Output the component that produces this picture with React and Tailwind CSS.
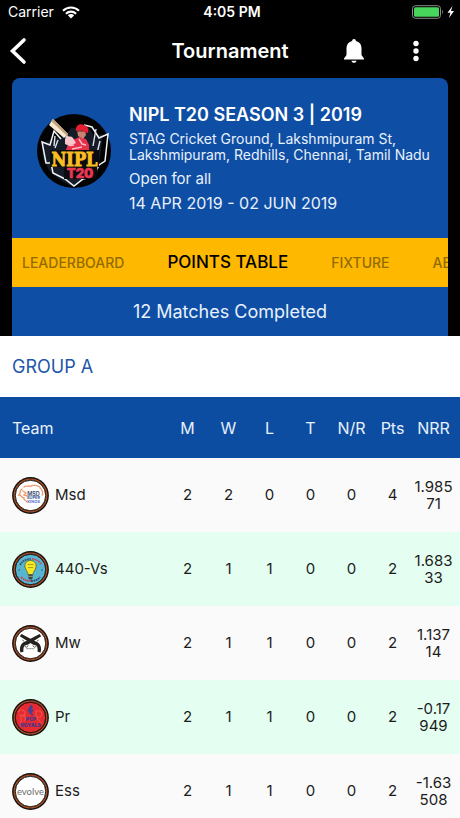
const teams = [
  { name: 'Msd', stats: [2, 2, 0, 0, 0, 4], nrr: '1.98571', Logo: MsdLogo },
  { name: '440-Vs', stats: [2, 1, 1, 0, 0, 2], nrr: '1.68333', Logo: BulbLogo },
  { name: 'Mw', stats: [2, 1, 1, 0, 0, 2], nrr: '1.13714', Logo: PistolsLogo },
  { name: 'Pr', stats: [2, 1, 1, 0, 0, 2], nrr: '-0.17949', Logo: RoyalsLogo },
  { name: 'Ess', stats: [2, 1, 1, 0, 0, 2], nrr: '-1.63508', Logo: EvolveLogo },
];

const statHeads = ['M', 'W', 'L', 'T', 'N/R', 'Pts', 'NRR'];

function Badge({ fill, children }) {
  return (
    <svg viewBox="0 0 37 37" className="size-[37px] shrink-0" aria-hidden="true">
      <circle cx="18.5" cy="18.5" r="18.4" fill="#15100e" />
      <circle cx="18.5" cy="18.5" r="15.200" fill={fill} />
      <circle cx="18.5" cy="18.5" r="16.300" fill="none" stroke="#a84f28" strokeWidth="1.300" />
      <circle cx="18.5" cy="18.5" r="15.200" fill="none" stroke="#1d1410" strokeWidth="0.900" />
      {children}
    </svg>
  );
}

function MsdLogo() {
  return (
    <Badge fill="#ffffff">
      <g fill="none" stroke="#ef9a6c" strokeWidth="1.400" strokeLinecap="round">
        <path d="M12 10c3-2 5 0 7-1s6-1 9 1" strokeDasharray="2.5 1" />
        <path d="M10 12c-3 2-1 4-3 6 3 0 2 3 5 3-1 2 2 2 3 4" />
        <path d="M11 14l3 2-2 2 3 1" />
        <path d="M28 11c3 2 3 5 2 8" strokeDasharray="2 1" />
      </g>
      <g fontFamily="Inter, sans-serif" fontWeight="700" textAnchor="middle">
        <text x="21.500" y="18.500" fontSize="5.500" fill="#4d5778">MSD</text>
        <text x="21.500" y="22.300" fontSize="4" fill="#3f5f9f">SUPER</text>
        <text x="21.500" y="26" fontSize="4" fill="#5a6fd8">KINGS</text>
      </g>
    </Badge>
  );
}

function BulbLogo() {
  return (
    <Badge fill="#57b5cf">
      <path d="M8 14c3-5 7-6 11-6" fill="none" stroke="#33496b" strokeWidth="1.6" strokeDasharray="1.6 .7" />
      <path d="M20 8c4 0 7 2 9 5" fill="none" stroke="#c4485a" strokeWidth="1.6" strokeDasharray="1.6 .7" />
      <path d="M9 26c3 3 6 4 10 4" fill="none" stroke="#c4485a" strokeWidth="1.8" strokeDasharray="1.8 .6" />
      <path d="M19 30c4 0 7-1 9-4" fill="none" stroke="#33496b" strokeWidth="1.8" strokeDasharray="1.8 .6" />
      <path d="M18.5 9.500c-4 0-6 3-5.500 6.500 .4 3 3 4.500 3 7.500h5c0-3 2.600-4.500 3-7.500.5-3.500-1.500-6.500-5.500-6.500z" fill="#f7e823" stroke="#56541d" strokeWidth=".7" />
      <path d="M15.500 13.500h6M16 16.500h5" fill="none" stroke="#a39a1f" strokeWidth=".9" />
      <path d="M16.300 23.500h4.400v3.500l-1 1.500h-2.400l-1-1.500z" fill="#3f4842" />
      <path d="M16.300 25.400h4.400" stroke="#cfd3a0" strokeWidth=".6" />
      <circle cx="7" cy="19" r=".7" fill="#33496b" />
      <circle cx="30" cy="19" r=".7" fill="#33496b" />
    </Badge>
  );
}

function PistolsLogo() {
  return (
    <Badge fill="#ffffff">
      <g fill="#24211f">
        <path d="M27.500 9l1.700 2.300-13 8.200-3.400 1c-1.600 1.500-1.400 3.500-1.400 6.200l-3 .8c-1.200-3.900-.3-7.500 2.600-10l3.300-1.500z" />
        <path d="M9.500 9l-1.700 2.300 13 8.200 3.400 1c1.600 1.500 1.400 3.500 1.400 6.200l3 .8c1.200-3.900.3-7.500-2.600-10l-3.300-1.500z" />
      </g>
      <path d="M12 16.500l-1.500-1.700M25 16.500l1.500-1.700M13 21c.6 1.800 2.500 1.600 3-.6M24 21c-.6 1.800-2.500 1.600-3-.6" stroke="#24211f" strokeWidth=".8" fill="none" />
      <path d="M14.500 23.700h8" stroke="#777" strokeWidth="1" strokeDasharray="1.400 .5" />
    </Badge>
  );
}

function RoyalsLogo() {
  return (
    <Badge fill="#e52b31">
      <path d="M6 13q3-4 6-1t-2 6M24 12h4q4 3 0 6h-4zM24 18l6 7M9 16v12M7 16h5q3 3 0 6" fill="none" stroke="#ee5148" strokeWidth="1.100" />
      <path d="M19 6l1.500 2.200-1.300 1.700 2.200 1.700-2.300 1.500 1.800 3.400-3-2-1.800-3.200 1.300-2.600z" fill="#48418f" stroke="#48418f" strokeWidth="1" />
      <g fontFamily="Inter, sans-serif" fontWeight="900" textAnchor="middle" fill="#46378f">
        <text x="19" y="22" fontSize="5">PCP</text>
        <text x="18.500" y="27.500" fontSize="5">ROYALS</text>
      </g>
    </Badge>
  );
}

function EvolveLogo() {
  return (
    <Badge fill="#ffffff">
      <text x="18.500" y="21.500" fontSize="9.500" textAnchor="middle" fontFamily="Lato, sans-serif" fill="#6a6a6a">
        evolve
      </text>
    </Badge>
  );
}

function TournamentLogo() {
  return (
    <svg viewBox="0 0 74 74" className="size-[74px] shrink-0" role="img" aria-label="NIPL T20">
      <circle cx="37" cy="37" r="37" fill="#020203" />
      <path d="M20 24l10-4 4-6h18l5 8 9-2-3 24-6 15-11 8-10 6-11-6-12-9-7-14-1-15z" fill="#151c28" />
      <path d="M24 25L17 17l-4 14-8-3 4 21h5l2 10 12 6 9 7 9-7 11-3 5-11 6-4 3-27-9 4-7-11-8-2" fill="none" stroke="#f1f3f6" strokeWidth="1.500" />
      <path d="M59 15l-3 17M63 27l-3 12M18 22l-1 10M21 26l-3 8" fill="none" stroke="#dfe4ec" strokeWidth="1.400" />
      <path d="M16 5l15 15-4 4L12 11z" fill="#f7ead0" />
      <path d="M16 5l15 15-1.500 1.500L14 7z" fill="#c7a477" />
      <path d="M29 22l6 6" stroke="#d6d0d2" strokeWidth="3" />
      <path d="M28 38l4-10 10-5 7 2 3 6v8z" fill="#e7304a" />
      <path d="M28 25c2-3 6-3 8-1l3 5-6 3-5-2z" fill="#f6c9cf" />
      <path d="M29 29c2 2 5 3 8 2M42 25l3 5 4 1M35 35l10-2" stroke="#f7b8c0" strokeWidth="1.500" fill="none" />
      <path d="M40 16h8l1 5-3 4-5-3z" fill="#c98271" />
      <path d="M39 17c-1-6 4-8 8-6 4 1 5 4 4 8l-4-1-3-2z" fill="#e3202f" />
      <path d="M40 17h6" stroke="#6f1019" strokeWidth="1" />
      <path d="M13 36h49v17h-2l1 5-3 7H27V53H13z" fill="#0a0c11" />
      <g textAnchor="middle">
        <text x="37.500" y="51.500" fontSize="18" fontWeight="700" fontFamily="'DejaVu Serif Condensed', 'DejaVu Serif', serif" fill="#f8bd22" stroke="#f8bd22" strokeWidth=".9">NIPL</text>
        <text x="43" y="64" fontSize="13" fontWeight="900" fontFamily="Inter, sans-serif" fill="#ea3853" stroke="#ea3853" strokeWidth=".4">T20</text>
      </g>
    </svg>
  );
}

function StatusBar() {
  return (
    <div className="grid h-6 grid-cols-3 items-center pr-1 pl-2 text-sm">
      <div className="flex items-center gap-2">
        <span>Carrier</span>
        <svg viewBox="0 0 18 13" className="h-[13px] w-[18px]" aria-hidden="true">
          <path d="M1 4.800a11.500 11.500 0 0 1 16 0M3.900 7.700a7.400 7.400 0 0 1 10.200 0" fill="none" stroke="white" strokeWidth="2.100" />
          <path d="M9 12.500L5.800 9.300a4.600 4.600 0 0 1 6.400 0z" fill="white" />
        </svg>
      </div>
      <span className="text-center font-semibold">4:05 PM</span>
      <svg viewBox="0 0 44 14" className="h-[14px] w-[44px] justify-self-end" aria-hidden="true">
        <rect x=".5" y=".7" width="28" height="12.600" rx="3" fill="none" stroke="#8b8b8b" strokeWidth="1" />
        <rect x="2" y="2.200" width="25" height="9.600" rx="1.500" fill="#47d65b" />
        <path d="M30 4.800q2 2.200 0 4.400z" fill="#777" />
        <path d="M40.500 1l-5 6.700h2.900L37 13l5-7h-3z" fill="white" />
      </svg>
    </div>
  );
}

function NavBar() {
  return (
    <header className="grid h-[54px] grid-cols-[1fr_auto_1fr] items-center px-2">
      <button type="button" aria-label="Back" className="justify-self-start">
        <svg viewBox="0 0 20 28" className="h-7 w-5">
          <path d="M16 3L4.500 14 16 25" fill="none" stroke="white" strokeWidth="3.600" strokeLinecap="round" />
        </svg>
      </button>
      <h1 className="text-xl font-semibold">Tournament</h1>
      <div className="flex items-center gap-[42px] justify-self-end pr-[26px]">
        <button type="button" aria-label="Notifications">
          <svg viewBox="0 0 20 24" className="h-6 w-5" fill="white">
            <path d="M10 0c1.200 0 1.900.8 1.900 1.900 3.600.9 5.600 3.600 5.600 7.200v7l2.500 3.400v1H0v-1l2.500-3.400v-7c0-3.600 2-6.300 5.600-7.200C8.100.8 8.800 0 10 0zM7.500 21.700h5c-.2 1.400-1.200 2.100-2.500 2.100s-2.300-.7-2.500-2.100z" />
          </svg>
        </button>
        <button type="button" aria-label="More options">
          <svg viewBox="0 0 20 24" className="h-6 w-5" fill="white">
            <circle cx="10" cy="4.500" r="2.700" />
            <circle cx="10" cy="12" r="2.700" />
            <circle cx="10" cy="19.500" r="2.700" />
          </svg>
        </button>
      </div>
    </header>
  );
}

function Tabs() {
  const idle = 'shrink-0 text-sm font-medium text-[#926b00]';
  return (
    <nav aria-label="Tournament sections" className="flex h-[49px] items-center gap-[43px] overflow-hidden bg-[#ffb800] pl-[10px] whitespace-nowrap">
      <button type="button" className={idle}>LEADERBOARD</button>
      <button type="button" aria-current="page" className="shrink-0 text-[17px] font-medium text-black">POINTS TABLE</button>
      <button type="button" className={idle}>FIXTURE</button>
      <button type="button" className={idle}>ABOUT</button>
    </nav>
  );
}

function PointsTable() {
  return (
    <table className="w-full table-fixed border-collapse text-[15px] text-[#1c1c1c]">
      <colgroup>
        <col />
        {statHeads.map((h) => <col key={h} className="w-[41px]" />)}
        <col className="w-[6px]" />
      </colgroup>
      <thead>
        <tr className="h-[61px] bg-[#0c4da2] text-base text-[#e8f1fc]">
          <th scope="col" className="pl-3 text-left font-normal">Team</th>
          {statHeads.map((h) => <th key={h} scope="col" className="p-0 text-center font-normal">{h}</th>)}
          <td />
        </tr>
      </thead>
      <tbody>
        {teams.map(({ name, stats, nrr, Logo }) => (
          <tr key={name} className="h-[74px] bg-[#fafafa] even:bg-[#e4fff1]">
            <th scope="row" className="py-0 pr-0 pl-3 text-left font-normal">
              <div className="flex items-center gap-1.5">
                <Logo />
                <span>{name}</span>
              </div>
            </th>
            {stats.map((s, i) => <td key={i} className="p-0 text-center">{s}</td>)}
            <td className="px-px py-0 text-center leading-[17px] break-all">{nrr}</td>
            <td />
          </tr>
        ))}
      </tbody>
    </table>
  );
}

export default function App() {
  return (
    <div className="flex h-screen flex-col overflow-hidden bg-black font-['Inter',sans-serif] text-white">
      <StatusBar />
      <NavBar />
      <main className="min-h-0 flex-1 overflow-y-auto [scrollbar-width:none]">
        <section className="mx-3 overflow-hidden rounded-t-lg bg-[#0f4ea5]">
          <div className="flex h-[160px] items-start gap-[18px] pl-[25px]">
            <div className="pt-9">
              <TournamentLogo />
            </div>
            <div className="min-w-0 flex-1 pt-[25px] text-[#e8f1fc]">
              <h2 className="text-lg leading-6 font-semibold text-white">NIPL T20 SEASON 3 | 2019</h2>
              <p className="mt-1 text-sm leading-4">
                STAG Cricket Ground, Lakshmipuram St,
                <br />
                Lakshmipuram, Redhills, Chennai, Tamil Nadu
              </p>
              <p className="mt-1.5 text-[15px] leading-5">Open for all</p>
              <p className="mt-1 text-base leading-5">14 APR 2019 - 02 JUN 2019</p>
            </div>
          </div>
          <Tabs />
          <p className="flex h-[49px] items-center justify-center text-lg text-[#e8f1fc]">12 Matches Completed</p>
        </section>
        <section className="bg-white">
          <h2 className="flex h-[61px] items-center pl-3 text-lg text-[#1e56a8]">GROUP A</h2>
          <PointsTable />
        </section>
      </main>
    </div>
  );
}
